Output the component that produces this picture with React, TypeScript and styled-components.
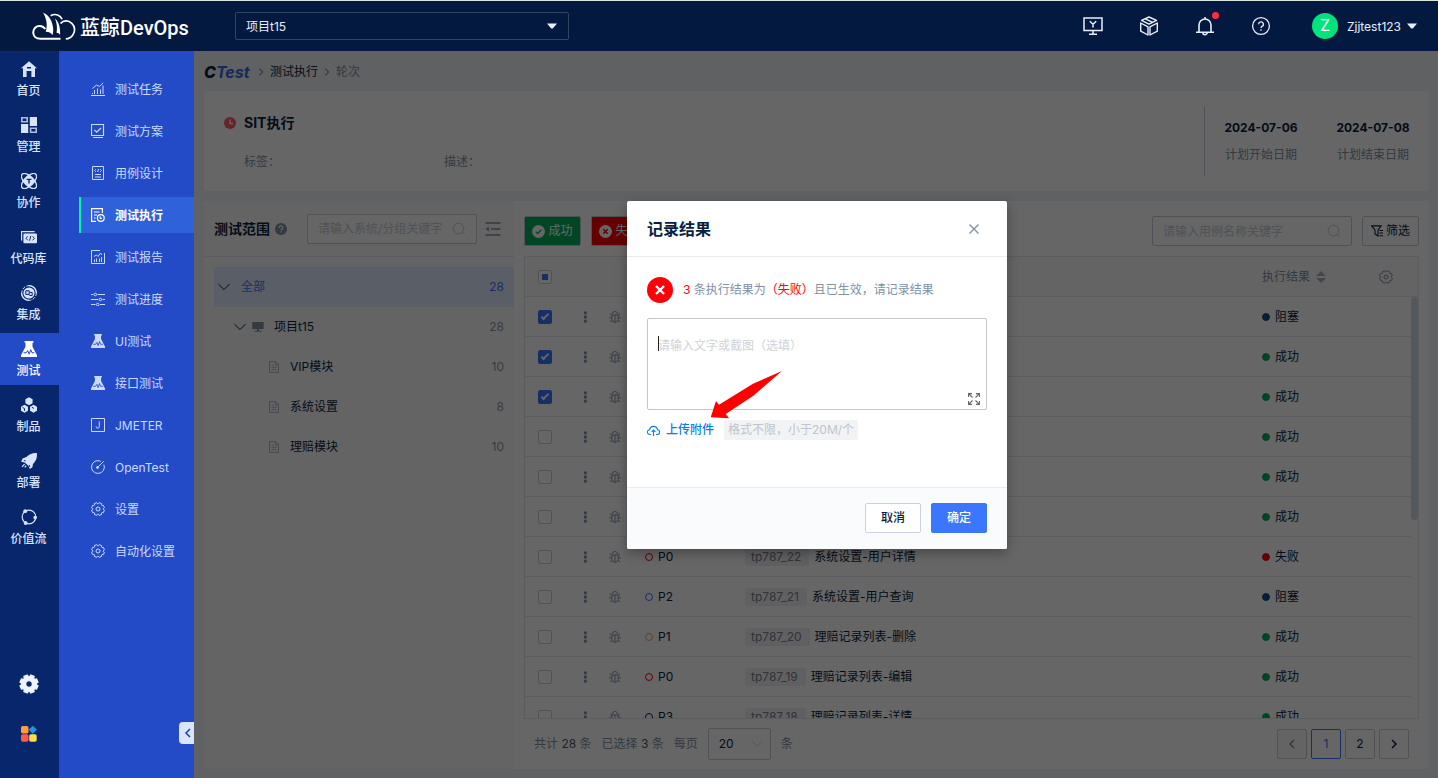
import React from 'react';
import styled, { createGlobalStyle } from 'styled-components';

const color = {
  ink: '#081e40',
  muted: '#8091a5',
  hint: '#c3cdd7',
  line: '#e3e6ed',
  border: '#c3cdd7',
  primary: '#3a76ff',
  page: '#f1f3f6',
  soft: '#fafbfd',
  success: '#00b05e',
  danger: '#ff0000',
  block: '#0b4f8a',
};

const GlobalStyle = createGlobalStyle`
  *, *::before, *::after { box-sizing: border-box; }
  body {
    margin: 0;
    font-family: Inter, "Noto Sans CJK SC", sans-serif;
    font-size: 12px;
    line-height: 18px;
    color: ${color.ink};
  }
  button, input, select, textarea { font: inherit; color: inherit; margin: 0; }
  button { cursor: pointer; padding: 0; border: 0; background: none; }
  a { color: inherit; text-decoration: none; }
  svg { display: block; flex: none; }
`;

/* ---------- icons ---------- */

type IconProps = { size?: number; children?: React.ReactNode; box?: number; sw?: number };

const Line = ({ size = 16, box = 16, sw = 1, children }: IconProps) => (
  <svg width={size} height={size} viewBox={`0 0 ${box} ${box}`} fill="none" stroke="currentColor" strokeWidth={sw} aria-hidden="true">
    {children}
  </svg>
);
const Solid = ({ size = 16, box = 16, children }: IconProps) => (
  <svg width={size} height={size} viewBox={`0 0 ${box} ${box}`} fill="currentColor" aria-hidden="true">
    {children}
  </svg>
);

const gearPath = (r1: number, r2: number, c: number, teeth = 8) => {
  const pts: string[] = [];
  for (let i = 0; i < teeth; i++) {
    const a = (i * 2 * Math.PI) / teeth + Math.PI / teeth;
    const at = (r: number, d: number) => `${(c + r * Math.cos(a + d)).toFixed(2)} ${(c + r * Math.sin(a + d)).toFixed(2)}`;
    pts.push(at(r1, -0.3), at(r2, -0.2), at(r2, 0.2), at(r1, 0.3));
  }
  return `M${pts.join('L')}Z`;
};

const IconHome = () => (
  <Solid>
    <path fillRule="evenodd" d="M8 0.3 0 7.2h2V16h3.6v-6h4.8v6H14V7.2h2ZM6 6h4v1.4H6Z" />
  </Solid>
);
const IconManage = () => (
  <Solid>
    <path fillRule="evenodd" d="M0 0h7v5.6H0ZM1.6 1.6v2.4h3.8V1.6Z" opacity=".8" />
    <path d="M8.800 0H16v9H8.800ZM0 7h7.200v9H0Z" />
    <path fillRule="evenodd" d="M8.800 10.400H16V16H8.800ZM10.400 12v2.400h4V12Z" opacity=".8" />
  </Solid>
);
const IconCollab = () => (
  <svg width="16" height="16" viewBox="0 0 16 16" aria-hidden="true">
    <g fill="none" stroke="currentColor" strokeWidth="1.3">
      <ellipse cx="8" cy="8" rx="9.600" ry="4.600" transform="rotate(45 8 8)" />
      <ellipse cx="8" cy="8" rx="9.600" ry="4.600" transform="rotate(-45 8 8)" />
    </g>
    <path d="M8 1.800 14.200 8 8 14.200 1.800 8Z" fill="currentColor" />
    <path d="M5.600 6.400h4.800M8 6.400v4.200" stroke="#08266c" strokeWidth="1.400" />
  </svg>
);
const IconRepo = () => (
  <svg width="16" height="16" viewBox="0 0 16 16" aria-hidden="true">
    <path d="M.6 11.5V2.6h13" fill="none" stroke="currentColor" strokeWidth="1.2" />
    <rect x="2.4" y="4.4" width="13.6" height="9.8" rx="1" fill="currentColor" />
    <path d="M6.8 7.3 5 9.3l1.8 2M11.6 7.3l1.8 2-1.8 2M9.8 6.9l-1.2 4.8" fill="none" stroke="#08266c" />
  </svg>
);
const IconIntegrate = () => (
  <svg width="16" height="16" viewBox="0 0 16 16" aria-hidden="true">
    <g fill="none" stroke="currentColor">
      <path d="M8 .6a7.4 7.4 0 0 1 7.4 7.4M8 15.4A7.4 7.4 0 0 1 .6 8" strokeWidth="1.3" />
      <circle cx="8" cy="8" r="7.3" strokeDasharray="3 1.5" />
    </g>
    <circle cx="8" cy="8" r="5.6" fill="currentColor" />
    <path d="M4.8 5.8h3.4v3.6H4.8zM8.6 7.4h2.6v3H8.2" fill="none" stroke="#08266c" />
  </svg>
);
const IconFlask = ({ size = 16 }: { size?: number }) => (
  <svg width={size} height={size} viewBox="0 0 16 16" aria-hidden="true">
    <path d="M3.600 0h8.800v1.800h-.9v4L16 14.200V16H0v-1.800L4.500 5.800v-4h-.9Z" fill="currentColor" />
    <path d="M2.600 11.800h2.600l1.500-2.200 1.500 3.600 1.500-4.600 1.300 3.200h2.400" fill="none" stroke="#234bc8" strokeWidth="1" />
  </svg>
);
const IconArtifact = () => (
  <svg width="16" height="16" viewBox="0 0 16 16" aria-hidden="true">
    <g fill="currentColor">
      <path d="M8 .2 11.6 2.2v4L8 8.2 4.4 6.2v-4Z" />
      <path d="M3.500 7.800 7 9.800v4L3.500 15.800 0 13.800v-4ZM12.500 7.800 16 9.800v4l-3.500 2L9 13.800v-4Z" />
    </g>
    <path d="M1.500 10.400 3.500 11.600v2.200M10.800 10.200l2 1.200" fill="none" stroke="#08266c" />
  </svg>
);
const IconRocket = () => (
  <svg width="16" height="16" viewBox="0 0 16 16" aria-hidden="true">
    <path d="M15.900.1c.3 3.900-.3 7.400-3.900 10.900l-.6 3.200L8.800 16l-1.400-3.300L3.600 9.600.1 8.800 1.600 5.400 5.400 4C8.500.8 12-.2 15.900.1Z" fill="currentColor" />
    <path d="M3.600 11.200 1 13.800M5.200 12.600l-1.400 1.800" stroke="currentColor" strokeWidth="1.200" />
    <path d="m2.800 7.400 1.900.6M8.600 14l-.2-2" stroke="#08266c" strokeWidth=".9" />
  </svg>
);
const IconStream = () => (
  <svg width="16" height="16" viewBox="0 0 16 16" aria-hidden="true">
    <circle cx="8" cy="8" r="6.800" fill="none" stroke="currentColor" strokeWidth="1.200" />
    <circle cx="4.200" cy="2.200" r="1.900" fill="currentColor" />
    <circle cx="14.200" cy="8.600" r="1.800" fill="currentColor" />
    <circle cx="4.600" cy="14" r="1.900" fill="currentColor" />
  </svg>
);
const IconGearSolid = () => (
  <Solid size={20} box={20}>
    <path fillRule="evenodd" stroke="currentColor" strokeWidth="1.400" strokeLinejoin="round" d={`${gearPath(7.2, 9.1, 10)}M10 6.600a3.400 3.400 0 1 0 0 6.800a3.400 3.400 0 1 0 0-6.800Z`} />
  </Solid>
);
const IconApps = () => (
  <svg width="16" height="16" viewBox="0 0 16 16" aria-hidden="true">
    <rect x="0" y="0" width="7.500" height="7.500" rx="1.800" fill="#ff9c3e" />
    <path d="M11.800 0 15.600 3.800 11.800 7.600 8 3.800Z" fill="#2d8fe0" stroke="#2d8fe0" strokeLinejoin="round" strokeWidth=".6" />
    <rect x="0" y="8.300" width="7.500" height="7.500" rx="1.800" fill="#ff5b43" />
    <rect x="8.200" y="8.300" width="7.500" height="7.500" rx="1.800" fill="#ffde4d" />
  </svg>
);

const IconChart = () => (
  <Line size={14} box={14}><path d="M0 13.500h14M3.500 12V8M6.500 12V6.500M9.500 12V7.500M12 12V3.500M1.500 6.500l4-3.500 3 1.500L12 .8M1.500 12v-1" /></Line>
);
const IconPlan = () => (
  <Line size={14} box={14}><path d="M.5.5h12v11H.5ZM3.500 6l2.200 2.200L10 4M2 13.500h10" strokeWidth="1.200" /></Line>
);
const IconDesign = () => (
  <Line size={14} box={14}><path d="M1.500.5h11v13h-11ZM4.800 3.200 3.500 4.500l1.300 1.300M9.200 3.200l1.300 1.300-1.300 1.300M7.600 3l-1 3M4 8.500h6M4 11h6" /></Line>
);
const IconExecute = () => (
  <Line size={14} box={14} sw={1.2}><path d="M5 13.400H.6V.6h10.800V5M3 4h5.500M3 7h3M3 10h1.500" /><circle cx="9.800" cy="10" r="3.400" /><path d="M9.300 8.600v1.800h1.500" /></Line>
);
const IconReport = () => (
  <Line size={14} box={14}><path d="M9 .5H.5v13h13V3M3.500 12V9.500M5.500 12V8.500M8.500 12V8.500M10.500 12V7M3 6.500 5.500 5l1.500 1.500L9.500 3l1.500 2" /></Line>
);
const IconProgress = () => (
  <Line size={14} box={14}><path d="M0 2.500h2M6.500 2.500H14M0 7.500h7M11.500 7.500H14M0 12.500h4.500M9 12.500h5" /><circle cx="4.300" cy="2.500" r="1.300" /><circle cx="9.300" cy="7.500" r="1.300" /><circle cx="6.700" cy="12.500" r="1.300" /></Line>
);
const IconJ = () => (
  <Line size={14} box={14}><path d="M.5.5h13v13H.5ZM8.300 3.500v5a1.600 1.600 0 0 1-3.200 0" /></Line>
);
const IconGauge = () => (
  <Line size={14} box={14}><path d="M9.800 1.300A6.400 6.400 0 1 0 12.900 4.700M6.500 7.500 12.800 1.200" /><circle cx="6.500" cy="7.500" r="1" fill="currentColor" /></Line>
);
const IconGear = () => (
  <Line size={14} box={14}><path strokeLinejoin="round" d={gearPath(5.3, 6.5, 7)} /><circle cx="7" cy="7" r="2" /></Line>
);
const IconBug = () => (
  <Line size={12} box={12} sw={0.9}>
    <path d="M3.600 3.500V2.800a2.400 2.400 0 0 1 4.800 0v.7M2.800 4h6.400v4.200a3.200 3.200 0 0 1-6.400 0ZM6 4v7.400M2.800 4 1 2.600M9.200 4 11 2.600M2.800 6.800H0M9.200 6.800H12M3 9.200l-2 1.600M9 9.200l2 1.600" />
  </Line>
);
const IconDots = () => (
  <Solid size={12} box={12}><path d="M5 .5h2.800v2.800H5ZM5 4.600h2.800v2.800H5ZM5 8.700h2.800v2.800H5Z" /></Solid>
);
const IconChevron = ({ size = 12, dir = 'down', sw = 1 }: { size?: number; dir?: 'down' | 'left' | 'right'; sw?: number }) => (
  <Line size={size} box={12} sw={sw}>
    <path d={dir === 'down' ? 'M.4 3l5.600 5.600L11.600 3' : dir === 'left' ? 'M8 2 4 6l4 4' : 'M4 2l4 4-4 4'} />
  </Line>
);
const IconSearch = () => (
  <Line size={14} box={14}><circle cx="6.500" cy="6.500" r="5.300" /><path d="m10.300 10.300 2.400 2.400" /></Line>
);
const IconMonitor = () => (
  <Solid size={12} box={12}><path d="M.3 1h11.400v7H.3ZM5 8h2v1.800h2.500v1h-7v-1H5Z" /></Solid>
);
const IconFile = () => (
  <Line size={12} box={12} sw={0.9}><path d="M1.500.6h6l3 3v7.800h-9ZM7.300.6v3.200h3.200M3.500 4h2M3.500 6.200h5M3.500 8.600h5" /></Line>
);
const IconFold = () => (
  <Line size={16} box={16} sw={1.4}><path d="M.5 2H15.500M6 8h9.500M.5 14h15" /><path d="M3.800 5.500v5L.8 8Z" fill="currentColor" stroke="none" /></Line>
);
const IconFilter = () => (
  <Line size={12} box={12} sw={1.1}><path d="M.6.900h9.600L7 5v6L4 9V5ZM8.500 5.500H12M8.500 8H12M8.500 10.800H12" /></Line>
);
const IconCaret = () => (
  <Solid size={10} box={10}><path d="M0 2.500h10L5.800 7.500H4.200Z" /></Solid>
);

const Whale = () => (
  <svg width="44" height="28" viewBox="0 0 44 28" fill="none" stroke="#fff" strokeWidth="2" aria-hidden="true">
    <path d="M28.500 26.800H8.500C4 26.800 1.200 24 1.200 20.300c0-3.800 3-6.500 6.600-6.300 2.400.1 4.300 1.300 5.400 3" />
    <path d="M11 .4c6 2.600 9.700 8.800 10.200 16.600.1 3-.2 5.100-.9 6.100-1-2-3-3.400-6.600-3.300C15.800 13 14.500 6.300 11 .4Z" fill="#fff" stroke="none" />
    <path d="M18.600 3.700c5-2.600 9.800-.6 11.500 3.600" strokeWidth="1.700" />
    <path d="M23 6.500c4.200 4 5.400 9 5.100 16.500-1-1.700-2-2.100-3.600-2.200 1-5 .4-9.600-1.500-14.300Z" fill="#fff" stroke="none" />
    <path d="M28.500 11.500c3.400-4 8.300-3 11.300-.2 3.600 3.300 3.500 8.400 1 11.700-1.500 2.300-3.900 3.700-7 3.900" strokeWidth="1.700" />
  </svg>
);

const IconScreen = () => (
  <Line size={20} box={20} sw={1.5}><path d="M1 2h18v12.500H1ZM10 14.500V18M6 18.200h8M6.800 5.200 10 8.300l3.200-3.100M10 8v3.500" /></Line>
);
const IconCube = () => (
  <Line size={20} box={20} sw={1.4}><path strokeLinejoin="round" d="M10 1 17.500 4.400 10 8.200 2.500 4.400ZM1.700 7 9 10.800V19L1.700 15.200ZM18.300 7 11 10.800V19l7.300-3.800ZM6.200 2.800l7.500 3.500" /></Line>
);
const IconBell = () => (
  <Line size={20} box={20} sw={1.6}><path d="M4 16V9a6 6 0 0 1 12 0v7M1 16.200h18M10 3V1M7.800 16.500a2.200 2.200 0 0 0 4.400 0" /></Line>
);
const IconHelp = () => (
  <Line size={20} box={20} sw={1.3}><circle cx="10" cy="10" r="8.400" /><path d="M7.600 8.300a2.400 2.400 0 1 1 3.500 2.100c-.8.400-1.100.8-1.100 1.700M10 13.200v1.500" /></Line>
);

/* ---------- top bar ---------- */

const Page = styled.div`
  height: 100vh;
  display: flex;
  flex-direction: column;
`;
const TopBar = styled.header`
  flex: none;
  height: 51px;
  display: flex;
  align-items: center;
  padding: 0 21px 0 32px;
  border-top: 1px solid #d9e6e0;
  background: #04193f;
  color: #fff;
`;
const Brand = styled.a`
  width: 203px;
  display: flex;
  align-items: center;
  gap: 4px;
  font: 500 20px/28px Roboto, "Noto Sans CJK SC", sans-serif;
  white-space: nowrap;
  span { padding-top: 3px; }
`;
const ProjectPicker = styled.label`
  position: relative;
  width: 334px;
  color: #e9eefa;
  select {
    appearance: none;
    width: 100%;
    height: 28px;
    padding: 2px 10px 0;
    border: 1px solid #34435f;
    border-radius: 2px;
    background: transparent;
    outline: none;
  }
  svg { position: absolute; right: 12px; top: 9px; pointer-events: none; }
`;
const Tools = styled.div`
  margin-left: auto;
  display: flex;
  align-items: center;
  gap: 36px;
  color: #e9eefa;
`;
const ToolButton = styled.button`
  position: relative;
  width: 20px;
  height: 20px;
`;
const Alert = styled.span`
  position: absolute;
  top: -4px;
  right: -4px;
  width: 7px;
  height: 7px;
  border-radius: 50%;
  background: #ff2d3a;
`;
const User = styled.button`
  display: flex;
  align-items: center;
  margin-left: 5px;
  color: #e9eefa;
`;
const Avatar = styled.span`
  width: 26px;
  height: 26px;
  margin-right: 9px;
  border-radius: 50%;
  background: #00e37c;
  color: #fff;
  font-size: 16px;
  line-height: 25px;
`;
const UserName = styled.span`
  margin-right: 6px;
  padding-top: 2px;
`;

/* ---------- navigation ---------- */

const Body = styled.div`
  flex: 1;
  min-height: 0;
  display: flex;
`;
const Rail = styled.nav`
  flex: none;
  width: 59px;
  display: flex;
  flex-direction: column;
  gap: 4px;
  padding: 2px 0 36px;
  background: #08266c;
`;
const RailItem = styled.a<{ $active?: boolean }>`
  height: 52px;
  padding: 8px 2px 0 0;
  display: flex;
  flex-direction: column;
  align-items: center;
  gap: 5px;
  font-weight: 500;
  color: ${(p) => (p.$active ? '#fff' : '#d8e4fc')};
  background: ${(p) => (p.$active ? '#234bc8' : 'transparent')};
`;
const RailFoot = styled.div`
  margin-top: auto;
  padding-right: 2px;
  display: flex;
  flex-direction: column;
  align-items: center;
  gap: 32px;
  color: #eef3fd;
  button { display: block; }
`;
const SubNav = styled.nav`
  position: relative;
  flex: none;
  width: 135px;
  display: flex;
  flex-direction: column;
  gap: 6px;
  padding: 20px 0 0 20px;
  background: #234bc8;
`;
const SubItem = styled.a<{ $active?: boolean }>`
  height: 36px;
  display: flex;
  align-items: center;
  gap: 10px;
  padding-left: 10px;
  border-left: 2px solid ${(p) => (p.$active ? '#00f5a0' : 'transparent')};
  background: ${(p) => (p.$active ? '#2f61da' : 'transparent')};
  color: ${(p) => (p.$active ? '#fff' : '#cbdaf8')};
  font-weight: ${(p) => (p.$active ? 700 : 400)};
  span { padding-top: 2px; }
`;
const Collapse = styled.button`
  position: absolute;
  right: 0;
  bottom: 34px;
  width: 15px;
  height: 22px;
  display: flex;
  align-items: center;
  justify-content: center;
  padding-left: 3px;
  border-radius: 4px 0 0 4px;
  background: #d8e5fd;
  color: #1f3fae;
`;

/* ---------- content ---------- */

const Main = styled.main`
  position: relative;
  flex: 1;
  min-width: 0;
  display: flex;
  flex-direction: column;
  padding: 0 9px 9px 10px;
  background: ${color.page};
`;
const Crumbs = styled.div`
  height: 40px;
  display: flex;
  align-items: center;
  gap: 4px;
  padding-top: 1px;
  color: ${color.muted};
  a { color: ${color.ink}; }
`;
const CTest = styled.strong`
  min-width: 48px;
  font-size: 16px;
  font-style: italic;
  font-weight: 800;
  color: ${color.ink};
  span { font-weight: 700; color: #356be0; }
`;
const Summary = styled.section`
  flex: none;
  height: 100px;
  display: flex;
  align-items: flex-start;
  padding: 16px 19px 15px 20px;
  margin-bottom: 10px;
  border-radius: 2px;
  background: #fff;
`;
const SummaryMain = styled.div`
  flex: 1;
  padding-top: 6px;
`;
const SummaryTitle = styled.h1`
  display: flex;
  align-items: center;
  gap: 8px;
  margin: 0 0 20px;
  font-size: 14px;
  line-height: 20px;
  font-weight: 700;
  svg { color: #ff5765; }
`;
const Fields = styled.div`
  display: flex;
  padding-left: 20px;
  color: ${color.muted};
  span { width: 200px; }
`;
const Dates = styled.dl`
  display: flex;
  gap: 38px;
  height: 69px;
  margin: 0;
  padding: 12px 0 0 19px;
  border-left: 1px solid ${color.border};
  text-align: center;
  div { min-width: 74px; display: flex; flex-direction: column-reverse; justify-content: flex-end; gap: 9px; }
  dt { color: ${color.muted}; }
  dd { margin: 0; font-weight: 700; }
`;
const Panels = styled.div`
  flex: 1;
  min-height: 0;
  display: flex;
`;
const ScopePanel = styled.section`
  flex: none;
  width: 310px;
  background: ${color.soft};
`;
const ScopeHead = styled.div`
  height: 56px;
  display: flex;
  align-items: center;
  padding: 0 10px;
  border-bottom: 1px solid ${color.line};
  color: ${color.muted};
  h2 { margin: 0 5px 0 0; font-size: 14px; font-weight: 700; color: ${color.ink}; }
`;
const SearchBox = styled.label<{ $w: number; $ml?: number }>`
  position: relative;
  width: ${(p) => p.$w}px;
  margin-left: ${(p) => p.$ml ?? 0}px;
  color: ${color.border};
  input {
    width: 100%;
    height: 30px;
    padding: 0 30px 0 10px;
    border: 1px solid ${color.border};
    border-radius: 2px;
    background: #fff;
    color: ${color.ink};
    outline: none;
    display: block;
  }
  input::placeholder { color: ${color.hint}; opacity: 1; }
  svg { position: absolute; right: 11px; top: 8px; }
`;
const FoldButton = styled.button`
  margin-left: 8px;
  color: ${color.muted};
`;
const Tree = styled.ul`
  list-style: none;
  margin: 0;
  padding: 10px 0 0 10px;
`;
const TreeRow = styled.li<{ $level: number; $active?: boolean }>`
  height: 40px;
  display: flex;
  align-items: center;
  gap: ${(p) => [11, 6, 10][p.$level]}px;
  padding: 0 10px 0 ${(p) => [4, 20, 54][p.$level]}px;
  color: ${(p) => (p.$active ? color.primary : color.ink)};
  background: ${(p) => (p.$active ? '#e1ecff' : 'transparent')};
  b { margin-left: auto; font-weight: 400; color: ${(p) => (p.$active ? color.primary : '#8b97a6')}; }
  svg { color: ${(p) => (p.$level === 2 ? '#a4acb8' : color.ink)}; }
  svg + svg { color: ${color.muted}; }
  svg + svg + span { margin-left: 4px; }
`;
const CasePanel = styled.section`
  flex: 1;
  min-width: 0;
  display: flex;
  flex-direction: column;
  background: #fff;
`;
const Toolbar = styled.div`
  flex: none;
  height: 55px;
  display: flex;
  gap: 10px;
  padding: 15px 10px 0;
`;
const Spacer = styled.div`
  flex: 1;
`;
const ResultButton = styled.button<{ $bg: string }>`
  width: 57px;
  height: 30px;
  display: flex;
  align-items: center;
  justify-content: center;
  gap: 3px;
  border: 1px solid ${color.border};
  border-radius: 2px;
  background: ${(p) => p.$bg};
  color: #fff;
`;
const FilterButton = styled(ResultButton)`
  color: ${color.ink};
`;
const TableBox = styled.div`
  position: relative;
  flex: 1;
  min-height: 0;
  overflow: hidden;
  margin: 0 10px;
  border: 1px solid ${color.line};
`;
const ScrollThumb = styled.div`
  position: absolute;
  top: 40px;
  right: 0;
  width: 7px;
  height: 223px;
  border-radius: 4px;
  background: #d3dde6;
`;
const Table = styled.table`
  width: 100%;
  table-layout: fixed;
  border-collapse: separate;
  border-spacing: 0;
  th { background: ${color.soft}; font-weight: 400; color: ${color.muted}; text-align: left; }
  th, td { height: 40px; padding: 0; border-bottom: 1px solid ${color.line}; }
  td:last-child { border-bottom: 0; }
`;
const CellBox = styled.div<{ $pl?: number; $center?: boolean; $muted?: boolean }>`
  display: flex;
  align-items: center;
  gap: 5px;
  padding-left: ${(p) => p.$pl ?? 0}px;
  justify-content: ${(p) => (p.$center ? 'center' : 'flex-start')};
  color: ${(p) => (p.$muted ? color.muted : 'inherit')};
  white-space: nowrap;
`;
const SortIcon = styled.span`
  color: #a9b2be;
`;
const Check = styled.input<{ $partial?: boolean }>`
  appearance: none;
  position: relative;
  width: 14px;
  height: 14px;
  border: 1px solid #c9ced8;
  border-radius: 2px;
  background: #fff;
  &:checked { border-color: ${color.primary}; background: ${color.primary}; }
  &:checked::after {
    content: '';
    position: absolute;
    left: 4px;
    top: 1px;
    width: 4px;
    height: 8px;
    border: solid #fff;
    border-width: 0 2px 2px 0;
    transform: rotate(45deg);
  }
  ${(p) => p.$partial && `&::before { content: ''; position: absolute; left: 3px; top: 3px; width: 6px; height: 6px; background: ${color.primary}; }`}
`;
const Ring = styled.i<{ $c: string }>`
  width: 8px;
  height: 8px;
  border: 1px solid ${(p) => p.$c};
  border-radius: 50%;
`;
const Dot = styled(Ring)`
  background: ${(p) => p.$c};
`;
const Code = styled.span`
  padding: 0 8px 0 6px;
  border-radius: 2px;
  background: #f0f1f5;
  color: #7b7f87;
`;
const Pager = styled.footer`
  flex: none;
  height: 50px;
  display: flex;
  align-items: center;
  gap: 10px;
  padding: 0 20px;
  color: ${color.muted};
  em { font-style: normal; color: #4b5563; }
`;
const PageSize = styled.label`
  position: relative;
  select {
    appearance: none;
    display: block;
    width: 63px;
    height: 32px;
    padding: 0 10px;
    border: 1px solid ${color.border};
    border-radius: 2px;
    background: #fff;
    color: ${color.ink};
    outline: none;
  }
  svg { position: absolute; right: 9px; top: 11px; pointer-events: none; color: ${color.border}; }
`;
const PageList = styled.div`
  margin-left: auto;
  display: flex;
  gap: 4px;
`;
const PageButton = styled.button<{ $active?: boolean }>`
  width: 30px;
  height: 30px;
  display: flex;
  align-items: center;
  justify-content: center;
  border: 1px solid ${(p) => (p.$active ? color.primary : color.border)};
  border-radius: 2px;
  color: ${(p) => (p.$active ? color.primary : color.ink)};
  &:disabled { background: ${color.soft}; color: ${color.muted}; }
`;

/* ---------- dialog ---------- */

const Mask = styled.div`
  position: absolute;
  inset: 0;
  display: flex;
  justify-content: center;
  align-items: flex-start;
  padding: 150px 0 0 2px;
  background: rgba(0, 0, 0, 0.6);
`;
const Dialog = styled.section`
  position: relative;
  width: 380px;
  border-radius: 2px;
  background: #fff;
  box-shadow: 0 4px 12px rgba(0, 0, 0, 0.3);
`;
const DialogHead = styled.header`
  height: 56px;
  display: flex;
  align-items: center;
  justify-content: space-between;
  padding: 0 27px 0 20px;
  border-bottom: 1px solid #e8eaec;
  color: ${color.muted};
  h2 { margin: 0; font-size: 16px; line-height: 24px; font-weight: 700; color: ${color.ink}; }
`;
const DialogBody = styled.div`
  height: 230px;
  padding: 20px;
`;
const Notice = styled.p`
  display: flex;
  align-items: center;
  gap: 10px;
  margin: 0 0 15px;
  color: ${color.muted};
  em { font-style: normal; color: ${color.danger}; }
`;
const NoteBox = styled.div`
  position: relative;
  margin-bottom: 10px;
  textarea {
    display: block;
    width: 100%;
    height: 92px;
    padding: 18px 10px;
    border: 1px solid #c4c6cc;
    border-radius: 2px;
    resize: none;
    outline: none;
  }
  textarea::placeholder { color: #cfd2d6; opacity: 1; }
  button { position: absolute; right: 7px; bottom: 5px; color: #63656e; }
`;
const TextCursor = styled.span`
  position: absolute;
  left: 11px;
  top: 18px;
  width: 1px;
  height: 15px;
  background: #222;
`;
const Upload = styled.div`
  display: flex;
  align-items: center;
  gap: 10px;
  button { display: flex; align-items: center; gap: 6px; color: #0a7cf0; font-weight: 500; }
  span { padding: 1px 4px; border-radius: 2px; background: #f2f3f5; color: #c0c4cc; }
`;
const DialogFoot = styled.footer`
  display: flex;
  justify-content: flex-end;
  gap: 10px;
  padding: 15px 20px 16px;
  border-top: 1px solid #e8eaec;
  background: ${color.soft};
  border-radius: 0 0 2px 2px;
`;
const DialogButton = styled.button<{ $primary?: boolean }>`
  width: 56px;
  height: 30px;
  border: 1px solid ${(p) => (p.$primary ? color.primary : '#c8d2e0')};
  border-radius: 2px;
  background: ${(p) => (p.$primary ? color.primary : '#fff')};
  color: ${(p) => (p.$primary ? '#fff' : color.ink)};
  font-weight: 500;
`;
const Pointer = styled.svg`
  position: absolute;
  left: 83px;
  top: 169px;
  pointer-events: none;
`;

/* ---------- data ---------- */

const rail: [string, React.ReactNode][] = [
  ['首页', <IconHome />],
  ['管理', <IconManage />],
  ['协作', <IconCollab />],
  ['代码库', <IconRepo />],
  ['集成', <IconIntegrate />],
  ['测试', <IconFlask />],
  ['制品', <IconArtifact />],
  ['部署', <IconRocket />],
  ['价值流', <IconStream />],
];
const sub: [string, React.ReactNode][] = [
  ['测试任务', <IconChart />],
  ['测试方案', <IconPlan />],
  ['用例设计', <IconDesign />],
  ['测试执行', <IconExecute />],
  ['测试报告', <IconReport />],
  ['测试进度', <IconProgress />],
  ['UI测试', <IconFlask size={14} />],
  ['接口测试', <IconFlask size={14} />],
  ['JMETER', <IconJ />],
  ['OpenTest', <IconGauge />],
  ['设置', <IconGear />],
  ['自动化设置', <IconGear />],
];
const prio: Record<string, string> = { P0: color.danger, P1: '#ff9c4a', P2: color.primary, P3: color.ink };
const results: Record<string, string> = { 成功: color.success, 失败: color.danger, 阻塞: color.block };
const cases = [
  { p: 'P1', id: 28, name: 'VIP模块-新增', r: '阻塞', on: true },
  { p: 'P0', id: 27, name: 'VIP模块-编辑', r: '成功', on: true },
  { p: 'P2', id: 26, name: 'VIP模块-查询', r: '成功', on: true },
  { p: 'P0', id: 25, name: '系统设置-用户新增', r: '成功' },
  { p: 'P1', id: 24, name: '系统设置-用户编辑', r: '成功' },
  { p: 'P1', id: 23, name: '系统设置-用户删除', r: '成功' },
  { p: 'P0', id: 22, name: '系统设置-用户详情', r: '失败' },
  { p: 'P2', id: 21, name: '系统设置-用户查询', r: '阻塞' },
  { p: 'P1', id: 20, name: '理赔记录列表-删除', r: '成功' },
  { p: 'P0', id: 19, name: '理赔记录列表-编辑', r: '成功' },
  { p: 'P3', id: 18, name: '理赔记录列表-详情', r: '成功' },
];

export default function App() {
  return (
    <Page>
      <GlobalStyle />
      <TopBar>
        <Brand href="#"><Whale /><span>蓝鲸DevOps</span></Brand>
        <ProjectPicker>
          <select aria-label="项目"><option>项目t15</option></select>
          <IconCaret />
        </ProjectPicker>
        <Tools>
          <ToolButton aria-label="控制台"><IconScreen /></ToolButton>
          <ToolButton aria-label="制品"><IconCube /></ToolButton>
          <ToolButton aria-label="通知"><IconBell /><Alert /></ToolButton>
          <ToolButton aria-label="帮助"><IconHelp /></ToolButton>
          <User>
            <Avatar>Z</Avatar>
            <UserName>Zjjtest123</UserName>
            <IconCaret />
          </User>
        </Tools>
      </TopBar>
      <Body>
        <Rail>
          {rail.map(([label, icon]) => (
            <RailItem href="#" key={label} $active={label === '测试'}>{icon}{label}</RailItem>
          ))}
          <RailFoot>
            <button aria-label="设置"><IconGearSolid /></button>
            <button aria-label="应用"><IconApps /></button>
          </RailFoot>
        </Rail>
        <SubNav>
          {sub.map(([label, icon]) => (
            <SubItem href="#" key={label} $active={label === '测试执行'}>{icon}<span>{label}</span></SubItem>
          ))}
          <Collapse aria-label="收起"><IconChevron dir="left" sw={1.5} /></Collapse>
        </SubNav>
        <Main>
          <Crumbs>
            <CTest>C<span>Test</span></CTest>
            <IconChevron dir="right" size={10} sw={1.3} />
            <a href="#">测试执行</a>
            <IconChevron dir="right" size={10} sw={1.3} />
            <span>轮次</span>
          </Crumbs>
          <Summary>
            <SummaryMain>
              <SummaryTitle>
                <Solid size={12} box={12}><circle cx="6" cy="6" r="6" /><path d="M6 2.500V6.500H9" fill="none" stroke="#fff" strokeWidth="1.300" /></Solid>
                SIT执行
              </SummaryTitle>
              <Fields><span>标签：</span><span>描述：</span></Fields>
            </SummaryMain>
            <Dates>
              <div><dt>计划开始日期</dt><dd>2024-07-06</dd></div>
              <div><dt>计划结束日期</dt><dd>2024-07-08</dd></div>
            </Dates>
          </Summary>
          <Panels>
            <ScopePanel>
              <ScopeHead>
                <h2>测试范围</h2>
                <Solid size={12} box={12}><circle cx="6" cy="6" r="6" /><path d="M4.200 4.800a1.800 1.800 0 1 1 2.600 1.500c-.6.300-.8.500-.8 1M6 8.200v1.200" fill="none" stroke="#fff" strokeWidth="1.300" /></Solid>
                <SearchBox $w={170} $ml={20}>
                  <input aria-label="搜索分组" placeholder="请输入系统/分组关键字" />
                  <IconSearch />
                </SearchBox>
                <FoldButton aria-label="折叠"><IconFold /></FoldButton>
              </ScopeHead>
              <Tree>
                <TreeRow $level={0} $active><IconChevron /><span>全部</span><b>28</b></TreeRow>
                <TreeRow $level={1}><IconChevron /><IconMonitor /><span>项目t15</span><b>28</b></TreeRow>
                <TreeRow $level={2}><IconFile /><span>VIP模块</span><b>10</b></TreeRow>
                <TreeRow $level={2}><IconFile /><span>系统设置</span><b>8</b></TreeRow>
                <TreeRow $level={2}><IconFile /><span>理赔模块</span><b>10</b></TreeRow>
              </Tree>
            </ScopePanel>
            <CasePanel>
              <Toolbar>
                <ResultButton $bg={color.success}>
                  <Solid size={13} box={12}><circle cx="6" cy="6" r="6" /><path d="m3.400 6.100 1.900 1.800L8.600 4.400" fill="none" stroke={color.success} strokeWidth="1.200" /></Solid>
                  成功
                </ResultButton>
                <ResultButton $bg={color.danger}>
                  <Solid size={13} box={12}><circle cx="6" cy="6" r="6" /><path d="m4 4 4 4M8 4 4 8" fill="none" stroke={color.danger} strokeWidth="1.400" /></Solid>
                  失败
                </ResultButton>
                <Spacer />
                <SearchBox $w={200}>
                  <input aria-label="搜索用例" placeholder="请输入用例名称关键字" />
                  <IconSearch />
                </SearchBox>
                <FilterButton $bg="#fff"><IconFilter />筛选</FilterButton>
              </Toolbar>
              <TableBox>
                <Table>
                  <colgroup>
                    <col width="40" /><col width="40" /><col width="20" /><col width="105" /><col />
                    <col width="114" /><col width="50" /><col width="7" />
                  </colgroup>
                  <thead>
                    <tr>
                      <th><CellBox $center><Check type="checkbox" $partial aria-label="全选" /></CellBox></th>
                      <th /><th />
                      <th><CellBox $pl={20}>优先级</CellBox></th>
                      <th><CellBox $pl={15}>用例名称</CellBox></th>
                      <th>
                        <CellBox $pl={15}>执行结果
                          <SortIcon><Solid size={12} box={12}><path d="M6 0 11 5H1ZM6 12 1 7h10Z" /></Solid></SortIcon>
                        </CellBox>
                      </th>
                      <th><CellBox $center><IconGear /></CellBox></th>
                      <th />
                    </tr>
                  </thead>
                  <tbody>
                    {cases.map((c) => (
                      <tr key={c.id}>
                        <td><CellBox $center><Check type="checkbox" defaultChecked={c.on} aria-label={c.name} /></CellBox></td>
                        <td><CellBox $center $muted><IconDots /></CellBox></td>
                        <td><CellBox $center $muted><IconBug /></CellBox></td>
                        <td><CellBox $pl={20}><Ring $c={prio[c.p]} />{c.p}</CellBox></td>
                        <td><CellBox $pl={15}><Code>tp787_{c.id}</Code>{c.name}</CellBox></td>
                        <td><CellBox $pl={15}><Dot $c={results[c.r]} />{c.r}</CellBox></td>
                        <td />
                        <td />
                      </tr>
                    ))}
                  </tbody>
                </Table>
                <ScrollThumb />
              </TableBox>
              <Pager>
                <span>共计 <em>28</em> 条</span>
                <span>已选择 <em>3</em> 条</span>
                <span>每页</span>
                <PageSize>
                  <select aria-label="每页条数"><option>20</option></select>
                  <IconChevron size={10} />
                </PageSize>
                <span>条</span>
                <PageList>
                  <PageButton disabled aria-label="上一页"><IconChevron dir="left" sw={1.5} /></PageButton>
                  <PageButton $active>1</PageButton>
                  <PageButton>2</PageButton>
                  <PageButton aria-label="下一页"><IconChevron dir="right" sw={1.5} /></PageButton>
                </PageList>
              </Pager>
            </CasePanel>
          </Panels>
          <Mask>
            <Dialog role="dialog" aria-label="记录结果">
              <DialogHead>
                <h2>记录结果</h2>
                <button aria-label="关闭"><Line size={12} box={12} sw={1.4}><path d="m1.500 1.500 9 9M10.500 1.500l-9 9" /></Line></button>
              </DialogHead>
              <DialogBody>
                <Notice>
                  <svg width="26" height="26" viewBox="0 0 26 26" aria-hidden="true"><circle cx="13" cy="13" r="13" fill="#ff0008" /><path d="m9 9 8 8M17 9l-8 8" stroke="#fff" strokeWidth="2.400" /></svg>
                  <span><em>3</em> 条执行结果为<em>（失败）</em>且已生效，请记录结果</span>
                </Notice>
                <NoteBox>
                  <textarea aria-label="结果说明" placeholder="请输入文字或截图（选填）" />
                  <TextCursor />
                  <button aria-label="全屏">
                    <Line size={12} box={12} sw={1.1}><path d="M.6 4V.6H4M.6.600 4.500 4.500M8 .6h3.400V4M11.400.600 7.500 4.500M.6 8v3.400H4M.6 11.400l3.900-3.900M8 11.400h3.400V8M11.400 11.400 7.500 7.500" /></Line>
                  </button>
                </NoteBox>
                <Upload>
                  <button>
                    <Line size={13} box={13} sw={1.1}><path d="M4 10.500H3a2.400 2.400 0 0 1-.4-4.800 4 4 0 0 1 7.900 0A2.400 2.400 0 0 1 10 10.500H9M6.500 12V6M4.600 7.900 6.500 6l1.900 1.900" /></Line>
                    上传附件
                  </button>
                  <span>格式不限，小于20M/个</span>
                </Upload>
              </DialogBody>
              <DialogFoot>
                <DialogButton>取消</DialogButton>
                <DialogButton $primary>确定</DialogButton>
              </DialogFoot>
              <Pointer width="73" height="50" viewBox="0 0 73 50" fill="#ff0000" aria-hidden="true">
                <path d="M.7 47.300 6 31l3 3.800L43 13.700 72 1 43 26 15.700 44l3.300 4.300Z" />
              </Pointer>
            </Dialog>
          </Mask>
        </Main>
      </Body>
    </Page>
  );
}
